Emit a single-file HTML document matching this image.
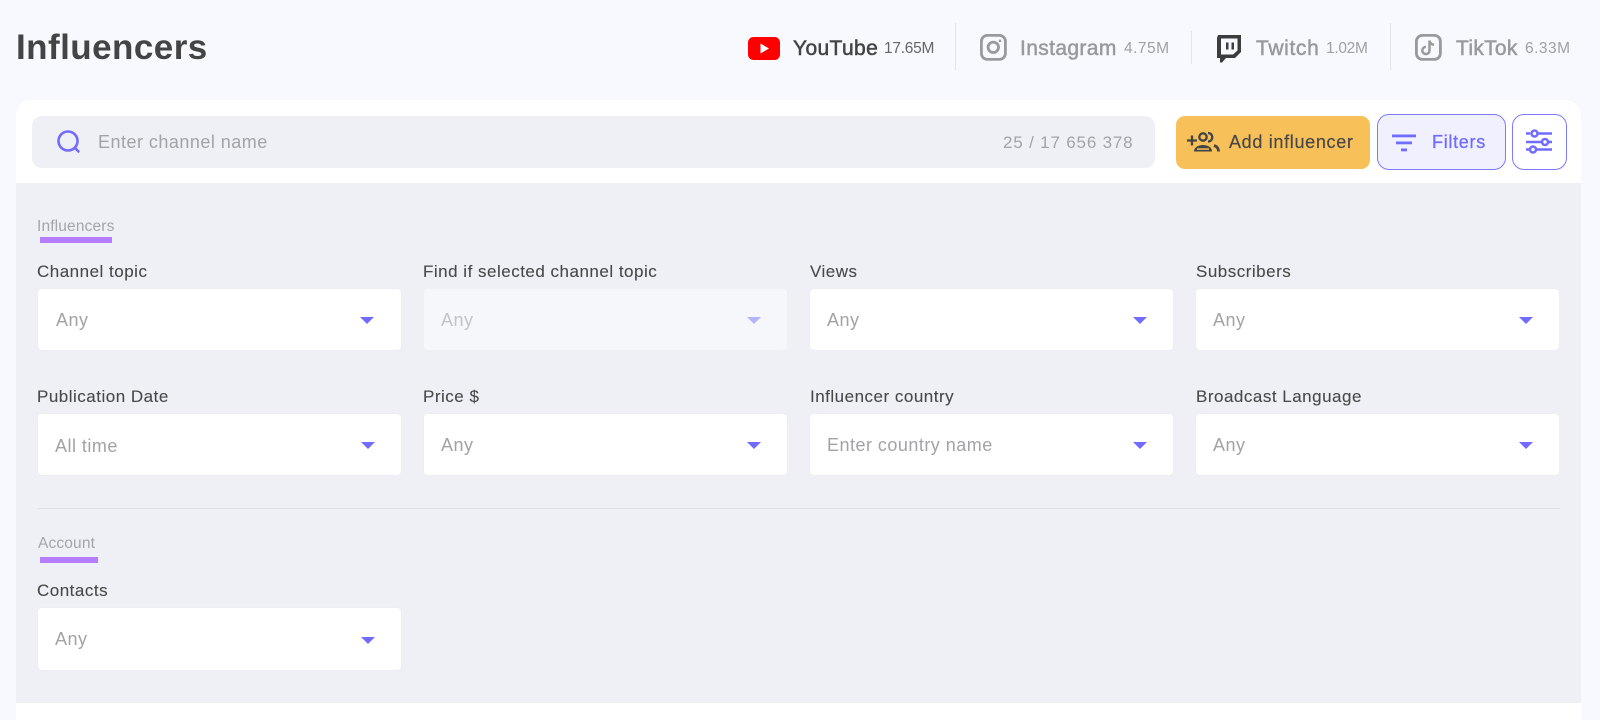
<!DOCTYPE html>
<html><head><meta charset="utf-8"><style>
*{box-sizing:border-box}
html,body{margin:0;padding:0;width:1600px;height:712px;overflow:hidden;background:#f8f9fe;font-family:"Liberation Sans",sans-serif}
.a{position:absolute;white-space:nowrap;line-height:1}
.box{position:absolute;width:363px;height:61px;background:#fff;border-radius:4px;box-shadow:0 0 1px #e2e3ea}
.lbl{font-size:17px;color:#484848;letter-spacing:.5px;-webkit-text-stroke:.1px #484848}
.ph{font-size:18px;color:#a3a3a6;letter-spacing:.48px}
.tri{position:absolute;width:0;height:0;border-left:7px solid transparent;border-right:7px solid transparent;border-top:7px solid #716cff}
.sec{font-size:15.5px;color:#a5a5a9;letter-spacing:.15px}
.bar{position:absolute;background:#b57dff;height:6px}
.net{font-size:21px;font-weight:400;-webkit-text-stroke:.5px currentColor;color:#9a9a9c;letter-spacing:.37px}
.cnt{font-size:15.5px;color:#a0a0a2;letter-spacing:-.1px}
.dv{position:absolute;width:1px;background:#e4e5ea}
</style></head><body>
<div class="a" style="left:16px;top:30px;font-size:35px;font-weight:700;color:#444;letter-spacing:.45px">Influencers</div>

<svg class="a" style="left:748px;top:37px" width="32" height="23" viewBox="0 0 32 23"><rect width="32" height="23" rx="5.5" fill="#fe0000"/><path d="M12.5 6.5v10l8.5-5z" fill="#fff"/></svg>
<div class="a net" style="left:793px;top:37.500px;color:#444">YouTube</div>
<div class="a cnt" style="left:884px;top:41px;color:#666;letter-spacing:-.25px">17.65M</div>
<div class="dv" style="left:955px;top:23px;height:47px"></div>

<svg class="a" style="left:980px;top:34px" width="27" height="27" viewBox="0 0 27 27" fill="none" stroke="#9a9a9c" stroke-width="2.8"><rect x="1.4" y="1.4" width="24" height="24" rx="6"/><circle cx="13.3" cy="13.3" r="5.2"/><circle cx="20" cy="6.8" r="1.3" fill="#9a9a9c" stroke="none"/></svg>
<div class="a net" style="left:1020px;top:37.500px">Instagram</div>
<div class="a cnt" style="left:1124px;top:41px;letter-spacing:.5px">4.75M</div>
<div class="dv" style="left:1191px;top:31px;height:33px"></div>

<svg class="a" style="left:1217px;top:35px" width="25" height="28" viewBox="0 0 25 28"><path d="M1 0H24V17L18 23H9L5 27.5H3V23H0V3z" fill="#3d3d3d"/><path d="M4 3.500H20.500V15.500L16 19.500H4z" fill="#f8f9fe"/><rect x="9" y="7.500" width="2.500" height="7" fill="#3d3d3d"/><rect x="14.500" y="7.500" width="2.500" height="7" fill="#3d3d3d"/></svg>
<div class="a net" style="left:1256px;top:37.500px;letter-spacing:.65px">Twitch</div>
<div class="a cnt" style="left:1326px;top:41px;letter-spacing:-.3px">1.02M</div>
<div class="dv" style="left:1390px;top:23px;height:47px"></div>

<svg class="a" style="left:1415px;top:34px" width="27" height="27" viewBox="0 0 27 27" fill="none" stroke="#9a9a9c"><rect x="1.4" y="1.4" width="24" height="24" rx="6" stroke-width="2.800"/><path d="M14.500 6.500V16.500a3.600 3.600 0 1 1-3.600-3.600M14.500 6.500c.3 2.500 2 4 4.500 4.200" stroke-width="2.500"/></svg>
<div class="a net" style="left:1456px;top:37.500px;letter-spacing:.3px">TikTok</div>
<div class="a cnt" style="left:1525px;top:41px;letter-spacing:.5px">6.33M</div>

<div class="a" style="left:16px;top:100px;width:1565px;height:620px;background:#fff;border-radius:16px 16px 0 0"></div>
<div class="a" style="left:16px;top:183px;width:1565px;height:520px;background:#eff0f5"></div>

<div class="a" style="left:32px;top:116px;width:1123px;height:52px;background:#eff0f5;border-radius:10px"></div>
<svg class="a" style="left:57px;top:130px" width="26" height="26" viewBox="0 0 26 26" fill="none" stroke="#716cff" stroke-width="2.600"><circle cx="11" cy="11" r="9.500"/><path d="M18 18l3.500 3.500" stroke-linecap="round"/></svg>
<div class="a" style="left:98px;top:133px;font-size:18px;color:#a3a3a6;letter-spacing:.48px">Enter channel name</div>
<div class="a" style="left:1003px;top:134px;font-size:17px;color:#a3a3a6;letter-spacing:.82px">25 / 17 656 378</div>

<div class="a" style="left:1176px;top:115.500px;width:194px;height:53px;background:#f8c058;border-radius:9px"></div>
<svg class="a" style="left:1186px;top:130px" width="34" height="24" viewBox="0 0 34 24" fill="none" stroke="#444" stroke-width="2.300"><path d="M1 10.500H11M6 5.500V15.500"/><circle cx="17" cy="7" r="3.700"/><path d="M22 3a4.200 4.200 0 0 1 0 8.500"/><path d="M8 21.500c0-4 4-6.500 9-6.500s9 2.500 9 6.500z" fill="#444" stroke="none"/><rect x="11" y="18.300" width="12" height="1.500" fill="#f8c058" stroke="none"/><path d="M28 15.500c3 .8 4.500 3 4.500 6" stroke-width="2.800"/></svg>
<div class="a" style="left:1229px;top:133px;font-size:18px;color:#484848;letter-spacing:.68px;-webkit-text-stroke:.2px #484848">Add influencer</div>

<div class="a" style="left:1377px;top:114px;width:129px;height:55.500px;background:#f0f0ff;border:1.500px solid #7d7aff;border-radius:12px"></div>
<svg class="a" style="left:1392px;top:134px" width="26" height="20" viewBox="0 0 26 20" fill="#716cff"><rect x="0" y="0.500" width="24" height="2.800"/><rect x="4" y="7.500" width="16" height="2.800"/><rect x="9" y="14.500" width="6" height="2.800"/></svg>
<div class="a" style="left:1432px;top:133px;font-size:18px;color:#716cff;letter-spacing:.7px;-webkit-text-stroke:.3px #716cff">Filters</div>

<div class="a" style="left:1512px;top:114px;width:55px;height:55.500px;background:#fff;border:1.500px solid #7d7aff;border-radius:12px"></div>
<svg class="a" style="left:1525px;top:128px" width="29" height="28" viewBox="0 0 29 28" fill="none" stroke="#716cff" stroke-width="2.600"><path d="M1 5.500H5M13 5.500H27M1 14H16M24 14H27M1 21.500H4M12 21.500H27"/><circle cx="9.500" cy="5.500" r="3"/><circle cx="20" cy="14" r="3"/><circle cx="8" cy="21.500" r="3"/></svg>

<div class="a sec" style="left:37px;top:218.500px">Influencers</div>
<div class="bar" style="left:40px;top:237px;width:72px"></div>

<div class="a lbl" style="left:37px;top:262.500px">Channel topic</div>
<div class="a lbl" style="left:423px;top:262.500px">Find if selected channel topic</div>
<div class="a lbl" style="left:810px;top:262.500px">Views</div>
<div class="a lbl" style="left:1196px;top:262.500px">Subscribers</div>

<div class="box" style="left:38px;top:289px"></div>
<div class="a ph" style="left:56px;top:310.500px">Any</div><div class="tri" style="left:360px;top:317px"></div>
<div class="box" style="left:424px;top:289px;background:#f6f7fa;box-shadow:none"></div>
<div class="a ph" style="left:441px;top:311px;color:#c4c4c8">Any</div><div class="tri" style="left:747px;top:317px;border-top-color:#b5b3fb"></div>
<div class="box" style="left:810px;top:289px"></div>
<div class="a ph" style="left:827px;top:310.500px">Any</div><div class="tri" style="left:1133px;top:317px"></div>
<div class="box" style="left:1196px;top:289px"></div>
<div class="a ph" style="left:1213px;top:310.500px">Any</div><div class="tri" style="left:1519px;top:317px"></div>

<div class="a lbl" style="left:37px;top:388px">Publication Date</div>
<div class="a lbl" style="left:423px;top:388px">Price $</div>
<div class="a lbl" style="left:810px;top:388px">Influencer country</div>
<div class="a lbl" style="left:1196px;top:388px">Broadcast Language</div>

<div class="box" style="left:38px;top:414px"></div>
<div class="a ph" style="left:55px;top:436.500px">All time</div><div class="tri" style="left:361px;top:442px"></div>
<div class="box" style="left:424px;top:414px"></div>
<div class="a ph" style="left:441px;top:435.500px">Any</div><div class="tri" style="left:747px;top:442px"></div>
<div class="box" style="left:810px;top:414px"></div>
<div class="a ph" style="left:827px;top:435.500px">Enter country name</div><div class="tri" style="left:1133px;top:442px"></div>
<div class="box" style="left:1196px;top:414px"></div>
<div class="a ph" style="left:1213px;top:435.500px">Any</div><div class="tri" style="left:1519px;top:442px"></div>

<div class="a" style="left:37px;top:508px;width:1523px;height:1px;background:#dfe0e5"></div>

<div class="a sec" style="left:38px;top:535.500px">Account</div>
<div class="bar" style="left:40px;top:557px;width:58px"></div>
<div class="a lbl" style="left:37px;top:582px">Contacts</div>
<div class="box" style="left:38px;top:608px;height:62px"></div>
<div class="a ph" style="left:55px;top:629.500px">Any</div><div class="tri" style="left:361px;top:637px"></div>
</body></html>
